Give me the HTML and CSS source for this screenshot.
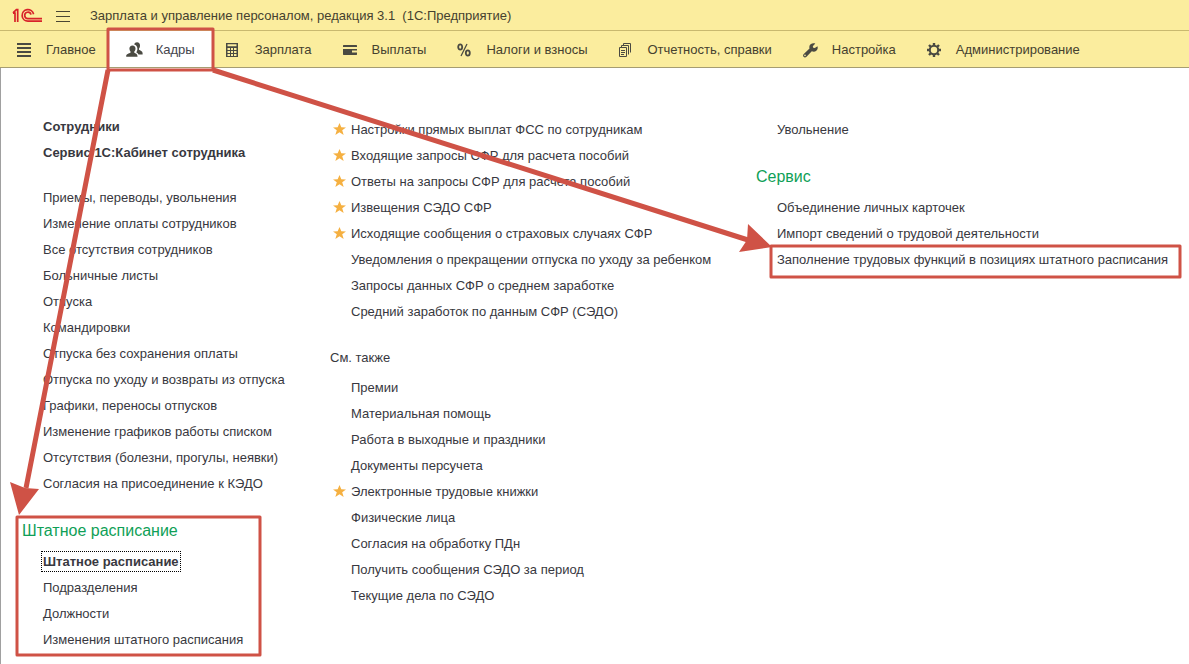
FILE: index.html
```html
<!DOCTYPE html>
<html lang="ru">
<head>
<meta charset="utf-8">
<title>Зарплата и управление персоналом</title>
<link rel="stylesheet" href="styles.css">
</head>
<body>
<header class="titlebar">
  <svg class="logo" viewBox="0 0 30 16" width="30" height="16" aria-label="1C" fill="none" stroke="#d8222a" stroke-width="1.7">
    <path d="M1 5.200H3V14M5.700 14V1.600H4.400L1 4.800"/>
    <path d="M30 13.200H16A5.800 5.800 0 1 1 21.600 6.200"/>
    <path d="M30 10.600H16A3.200 3.200 0 1 1 19 6.600"/>
  </svg>
  <button class="menu" type="button" aria-label="Меню">
    <svg viewBox="0 0 14 12" width="14" height="12" stroke="#4a4632"><path d="M0 1.5H14M0 6.5H14M0 11.5H14"/></svg>
  </button>
  <h1 class="title">Зарплата и управление персоналом, редакция 3.1&nbsp; (1С:Предприятие)</h1>
</header>
<nav class="sections">
  <a class="section" href="#"><svg class="icon" viewBox="0 0 16 16"><path d="M0 2H14M0 6H14M0 10H14M0 14H14" stroke="currentColor" stroke-width="2"/></svg>Главное</a>
  <a class="section active" href="#"><svg class="icon" viewBox="0 0 16 16"><g fill="currentColor"><path d="M7.200 2.600C7.600.900 8.600.200 10 .200c2 0 3 1.300 3 3.200 0 1.500-.5 2.500-1 3v1.400c1.200.8 3.500 1.200 3.600 3.300V12.500H11.500c-.6-1.300-1.500-1.800-2.200-2.300.8-1 1.100-2 1.100-3.400C10.400 4.600 9.200 3.100 7.200 2.600Z"/><path d="M5.500 3.400c-2 0-3.100 1.300-3.100 3.200 0 1.300.4 2.300 1.100 3v1.200C2 11.600-.8 12-.8 14V14.800H10.500v-.8c0-2-2-2.500-3.200-3.200V9.600c.7-.7 1.200-1.700 1.200-3C8.500 4.700 7.500 3.400 5.500 3.400Z"/></g></svg>Кадры</a>
  <a class="section" href="#"><svg class="icon" viewBox="0 0 16 16"><path fill="currentColor" fill-rule="evenodd" d="M0 1H12V15H0ZM1.500 2.300V4.300H10.500V2.300ZM1.500 6V8H4V6ZM5 6V8H7V6ZM8 6V8H10.500V6ZM1.500 9V11H4V9ZM5 9V11H7V9ZM8 9V11H10.500V9ZM1.500 12V14H4V12ZM5 12V14H7V12ZM8 12V14H10.500V12Z"/></svg>Зарплата</a>
  <a class="section" href="#"><svg class="icon" viewBox="0 0 16 16"><path fill="currentColor" d="M.5 3H13.500L14 3.500V5H0V3.500ZM0 7H14V8.500H9V10.500H14V12.500L13.500 13H.5L0 12.500Z"/></svg>Выплаты</a>
  <a class="section" href="#"><svg class="icon" viewBox="0 0 16 16" fill="none" stroke="currentColor" stroke-width="1.800"><ellipse cx="3.200" cy="5" rx="2" ry="2.700"/><ellipse cx="10.800" cy="11" rx="2" ry="2.700"/><path d="M10 2L4 14" stroke-width="1.300"/></svg>Налоги и взносы</a>
  <a class="section" href="#"><svg class="icon" viewBox="0 0 16 16" fill="none" stroke="currentColor"><path d="M.5 5.500H7.500V14.500H.5ZM2.500 5V3.500H9.500V12.500M4.500 3V1.500H11.500V10.500M2 8.500H6M2 10.500H6M2 12.500H5"/></svg>Отчетность, справки</a>
  <a class="section" href="#"><svg class="icon" viewBox="0 0 16 16"><path fill="currentColor" d="M14.500 4.200L11.800 6 10.200 5.800 9.800 4.300 12.300 1.600C10 .6 7.300 1.500 6.500 3.800 6.200 4.800 6.300 5.700 6.500 6.500L.8 11.900C-.2 13-.1 14.100.6 14.800 1.500 15.700 2.700 15.500 3.500 14.700L8.800 9.200C10.300 9.900 12 9.800 13.300 8.700 14.700 7.500 15 5.800 14.500 4.200ZM2 14.200A.8.8 0 1 1 2 12.600 .8.8 0 0 1 2 14.200Z"/></svg>Настройка</a>
  <a class="section" href="#"><svg class="icon" viewBox="0 0 16 16" fill="none" stroke="currentColor"><circle cx="7" cy="8" r="4.200" stroke-width="2"/><path stroke-width="2.400" d="M7 1V4M7 12V15M0 8H3M11 8H14M2 3L4 5M10 11L12 13M12 3L10 5M4 11L2 13"/></svg>Администрирование</a>
</nav>
<main class="content">
  <div class="column">
    <ul class="list strong">
      <li><a href="#">Сотрудники</a></li>
      <li><a href="#">Сервис 1С:Кабинет сотрудника</a></li>
    </ul>
    <ul class="list">
      <li><a href="#">Приемы, переводы, увольнения</a></li>
      <li><a href="#">Изменение оплаты сотрудников</a></li>
      <li><a href="#">Все отсутствия сотрудников</a></li>
      <li><a href="#">Больничные листы</a></li>
      <li><a href="#">Отпуска</a></li>
      <li><a href="#">Командировки</a></li>
      <li><a href="#">Отпуска без сохранения оплаты</a></li>
      <li><a href="#">Отпуска по уходу и возвраты из отпуска</a></li>
      <li><a href="#">Графики, переносы отпусков</a></li>
      <li><a href="#">Изменение графиков работы списком</a></li>
      <li><a href="#">Отсутствия (болезни, прогулы, неявки)</a></li>
      <li><a href="#">Согласия на присоединение к КЭДО</a></li>
    </ul>
    <section class="group">
      <h2 class="heading">Штатное расписание</h2>
      <ul class="list">
        <li><a class="focused" href="#">Штатное расписание</a></li>
        <li><a href="#">Подразделения</a></li>
        <li><a href="#">Должности</a></li>
        <li><a href="#">Изменения штатного расписания</a></li>
      </ul>
    </section>
  </div>
  <div class="column">
    <ul class="list">
      <li class="starred"><a href="#">Настройки прямых выплат ФСС по сотрудникам</a></li>
      <li class="starred"><a href="#">Входящие запросы СФР для расчета пособий</a></li>
      <li class="starred"><a href="#">Ответы на запросы СФР для расчета пособий</a></li>
      <li class="starred"><a href="#">Извещения СЭДО СФР</a></li>
      <li class="starred"><a href="#">Исходящие сообщения о страховых случаях СФР</a></li>
      <li><a href="#">Уведомления о прекращении отпуска по уходу за ребенком</a></li>
      <li><a href="#">Запросы данных СФР о среднем заработке</a></li>
      <li><a href="#">Средний заработок по данным СФР (СЭДО)</a></li>
    </ul>
    <section class="group">
      <h2 class="subheading">См. также</h2>
      <ul class="list">
        <li><a href="#">Премии</a></li>
        <li><a href="#">Материальная помощь</a></li>
        <li><a href="#">Работа в выходные и праздники</a></li>
        <li><a href="#">Документы персучета</a></li>
        <li class="starred"><a href="#">Электронные трудовые книжки</a></li>
        <li><a href="#">Физические лица</a></li>
        <li><a href="#">Согласия на обработку ПДн</a></li>
        <li><a href="#">Получить сообщения СЭДО за период</a></li>
        <li><a href="#">Текущие дела по СЭДО</a></li>
      </ul>
    </section>
  </div>
  <div class="column">
    <ul class="list">
      <li><a href="#">Увольнение</a></li>
    </ul>
    <section class="group">
      <h2 class="heading">Сервис</h2>
      <ul class="list">
        <li><a href="#">Объединение личных карточек</a></li>
        <li><a href="#">Импорт сведений о трудовой деятельности</a></li>
        <li><a href="#">Заполнение трудовых функций в позициях штатного расписания</a></li>
      </ul>
    </section>
  </div>
</main>
<svg class="markup" viewBox="0 0 1189 664" width="1189" height="664" aria-hidden="true">
  <g fill="none" stroke="#cf5246" stroke-width="3" stroke-linejoin="round">
    <rect x="108" y="29" width="105" height="41"/>
    <rect x="17" y="517" width="243" height="138"/>
    <rect x="771" y="246" width="409" height="31"/>
    <path stroke-width="5" d="M108 70L26 488M213 70L748 240"/>
  </g>
  <g fill="#cf5246">
    <path d="M19 515L10 482L25 488L39 489Z"/>
    <path d="M772 247L739 252L747 240L748 224Z"/>
  </g>
</svg>
</body>
</html>
```
FILE: styles.css
```css
* { box-sizing: border-box; }

body {
  margin: 0;
  position: relative;
  min-height: 100vh;
  display: flex;
  flex-direction: column;
  background: #fff;
  color: #383840;
  font: 13px/26px "Liberation Sans", Arial, sans-serif;
}

a { color: inherit; text-decoration: none; white-space: nowrap; }
ul, h1, h2 { margin: 0; padding: 0; }
ul { list-style: none; }

.titlebar {
  display: flex;
  align-items: center;
  padding: 3px 12px 1px;
  background: #fbed9e;
  border-bottom: 1px solid #c9b96f;
}
.logo { flex: none; }
.menu {
  display: flex;
  margin: 0 20px 0 14px;
  padding: 0;
  border: 0;
  background: none;
}
.title { font-size: 13px; font-weight: 400; color: #45412f; white-space: nowrap; }

.sections {
  display: flex;
  background: #fbed9e;
  border-bottom: 1px solid #a69d72;
}
.section {
  display: flex;
  align-items: center;
  gap: 13px;
  padding: 6px 15px 4px 17px;
  color: #45412f;
}
.section + .section { padding-left: 16px; }
.section.active { margin: 0 -3px 0 -2px; padding-left: 18px; padding-right: 18px; background: #fff; color: #45454c; }
.icon { width: 16px; height: 16px; color: #4a4a42; overflow: visible; }

.content {
  flex: 1;
  display: grid;
  grid-template-columns: 308px 426px 1fr;
  padding: 49px 0 8px 21px;
  border-left: 1px solid #a0a0a0;
}
.strong { margin: -3px 0 19px; font-weight: 700; }
.list { padding-left: 21px; }
.group { margin-top: 20px; }
.heading { font-size: 16px; font-weight: 400; line-height: 28px; color: #0f9f57; margin-bottom: 4px; }
.subheading { font-size: 13px; font-weight: 400; margin-bottom: 4px; }

.starred::before {
  content: "";
  float: left;
  width: 13px;
  height: 12px;
  margin: 6px 0 0 -18px;
  background: #f5b041;
  clip-path: polygon(50% 0, 64% 35%, 100% 38%, 71% 61%, 82% 100%, 50% 78%, 18% 100%, 29% 61%, 0 38%, 36% 35%);
}
.focused { font-weight: 700; padding: 2px 1px; margin-left: -2px; border: 1px dotted #000; }

.markup { position: absolute; top: 0; left: 0; pointer-events: none; }
```
